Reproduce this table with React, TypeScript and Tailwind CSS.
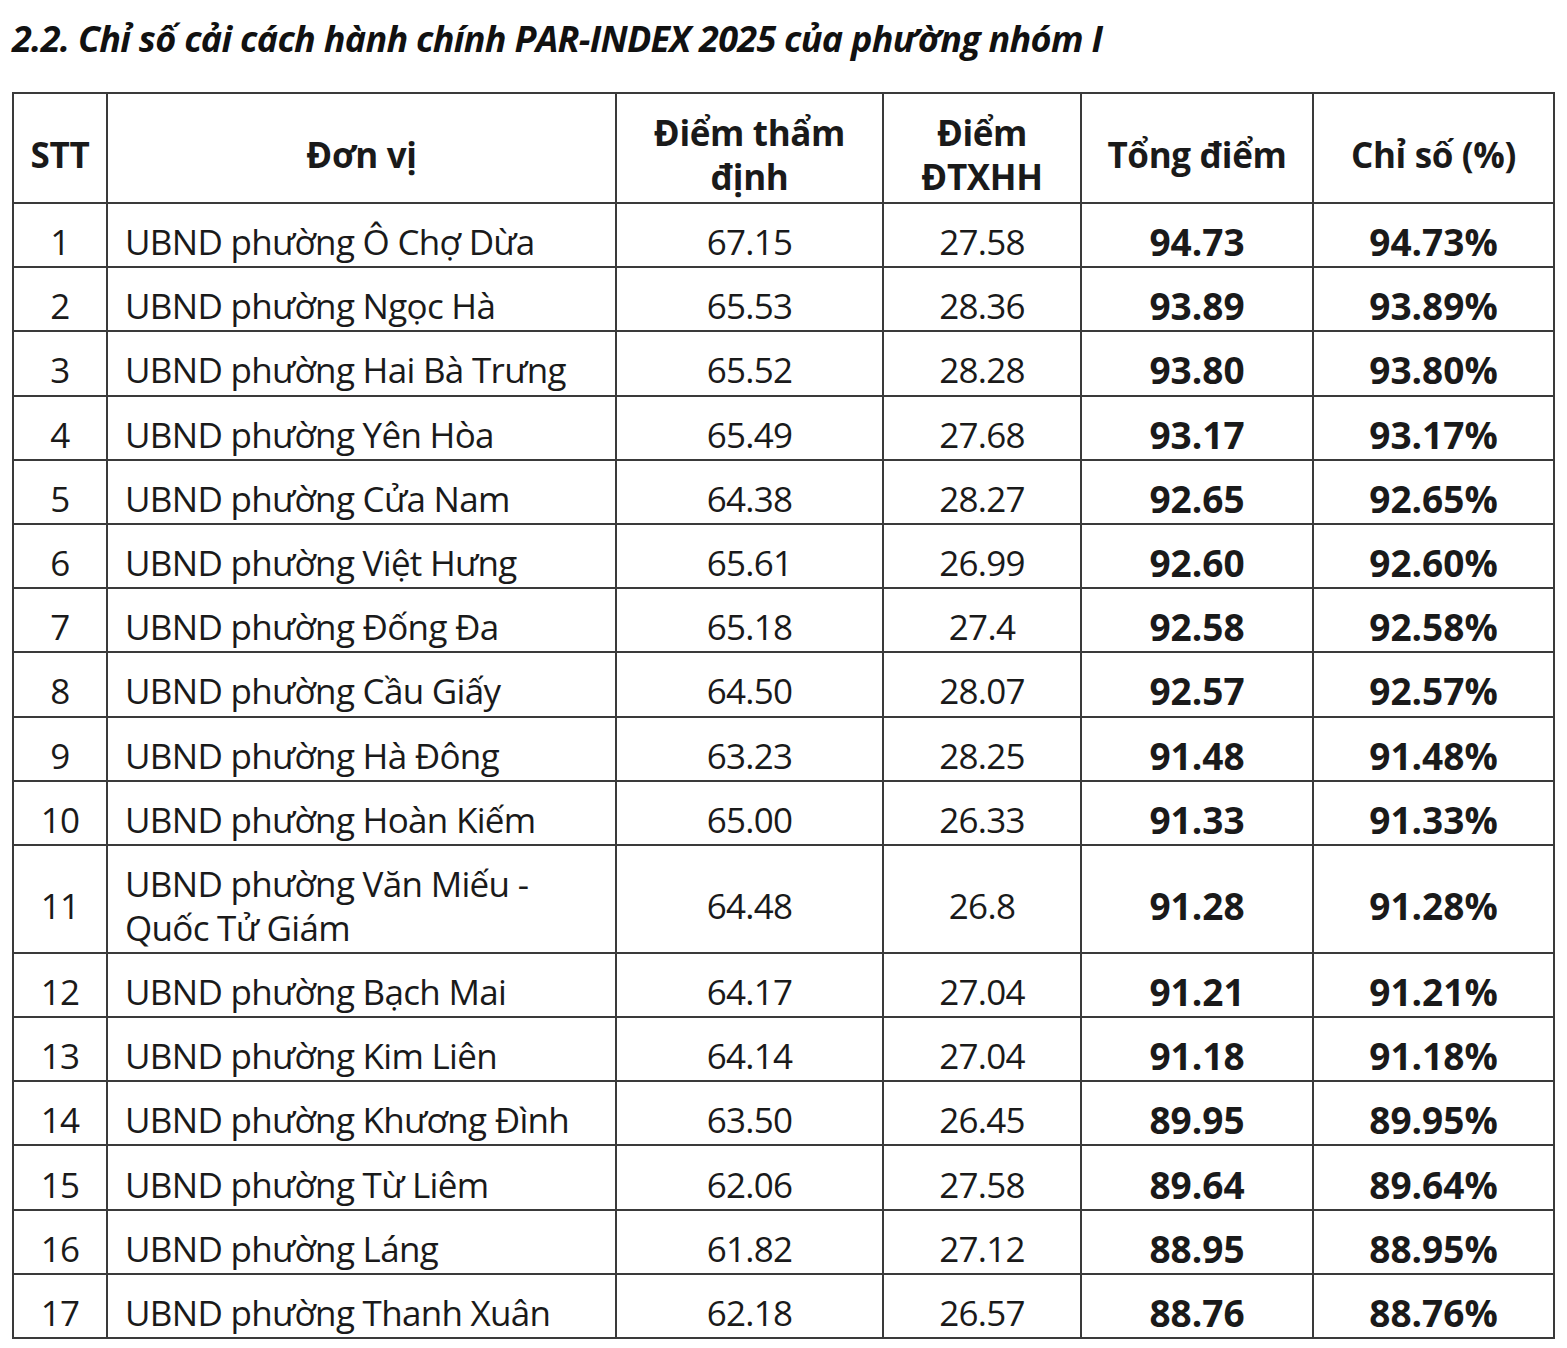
import React from "react";

const rows: [number, string, string, string, string, string][] = [
  [1, "UBND phường Ô Chợ Dừa", "67.15", "27.58", "94.73", "94.73%"],
  [2, "UBND phường Ngọc Hà", "65.53", "28.36", "93.89", "93.89%"],
  [3, "UBND phường Hai Bà Trưng", "65.52", "28.28", "93.80", "93.80%"],
  [4, "UBND phường Yên Hòa", "65.49", "27.68", "93.17", "93.17%"],
  [5, "UBND phường Cửa Nam", "64.38", "28.27", "92.65", "92.65%"],
  [6, "UBND phường Việt Hưng", "65.61", "26.99", "92.60", "92.60%"],
  [7, "UBND phường Đống Đa", "65.18", "27.4", "92.58", "92.58%"],
  [8, "UBND phường Cầu Giấy", "64.50", "28.07", "92.57", "92.57%"],
  [9, "UBND phường Hà Đông", "63.23", "28.25", "91.48", "91.48%"],
  [10, "UBND phường Hoàn Kiếm", "65.00", "26.33", "91.33", "91.33%"],
  [11, "UBND phường Văn Miếu - Quốc Tử Giám", "64.48", "26.8", "91.28", "91.28%"],
  [12, "UBND phường Bạch Mai", "64.17", "27.04", "91.21", "91.21%"],
  [13, "UBND phường Kim Liên", "64.14", "27.04", "91.18", "91.18%"],
  [14, "UBND phường Khương Đình", "63.50", "26.45", "89.95", "89.95%"],
  [15, "UBND phường Từ Liêm", "62.06", "27.58", "89.64", "89.64%"],
  [16, "UBND phường Láng", "61.82", "27.12", "88.95", "88.95%"],
  [17, "UBND phường Thanh Xuân", "62.18", "26.57", "88.76", "88.76%"],
];

const cell = "border-2 border-[#3a3a3a] text-center align-middle pt-[14px] pb-0 leading-[40px]";

export default function App() {
  return (
    <div
      className="w-[1567px] h-[1348px] bg-white text-[#1a1a1a] pl-[12px] pt-[16px]"
      style={{ fontFamily: '"Open Sans", "Noto Sans", sans-serif' }}
    >
      <h1 className="text-[36px] leading-[46px] font-bold italic tracking-[-0.02em] text-[#111]">
        2.2. Chỉ số cải cách hành chính PAR-INDEX 2025 của phường nhóm I
      </h1>
      <table className="mt-[30px] w-[1541px] table-fixed border-collapse border-2 border-[#2a2a2a] text-[35px] tracking-[-0.02em]">
        <colgroup>
          <col className="w-[94px]" />
          <col className="w-[509px]" />
          <col className="w-[267px]" />
          <col className="w-[198px]" />
          <col className="w-[232px]" />
          <col className="w-[241px]" />
        </colgroup>
        <thead>
          <tr className="h-[110px] font-bold tracking-[-0.01em]">
            <th className={`${cell} !leading-[44px]`}>STT</th>
            <th className={`${cell} !leading-[44px]`}>Đơn vị</th>
            <th className={`${cell} !leading-[44px]`}>
              Điểm thẩm
              <br />
              định
            </th>
            <th className={`${cell} !leading-[44px]`}>
              Điểm
              <br />
              ĐTXHH
            </th>
            <th className={`${cell} !leading-[44px]`}>Tổng điểm</th>
            <th className={`${cell} !leading-[44px]`}>Chỉ số (%)</th>
          </tr>
        </thead>
        <tbody>
          {rows.map(([n, name, a, b, t, p]) => (
            <tr key={n} className={n === 11 ? "h-[108px]" : "h-[64.2px]"}>
              <td className={cell}>{n}</td>
              <td className={`${cell} !text-left pl-[17px] ${n === 11 ? "!leading-[44px]" : ""}`}>
                {n === 11 ? (
                  <>
                    UBND phường Văn Miếu -
                    <br />
                    Quốc Tử Giám
                  </>
                ) : (
                  name
                )}
              </td>
              <td className={cell}>{a}</td>
              <td className={cell}>{b}</td>
              <td className={`${cell} font-bold text-[37px] tracking-normal`}>{t}</td>
              <td className={`${cell} font-bold text-[37px] tracking-normal`}>{p}</td>
            </tr>
          ))}
        </tbody>
      </table>
    </div>
  );
}
